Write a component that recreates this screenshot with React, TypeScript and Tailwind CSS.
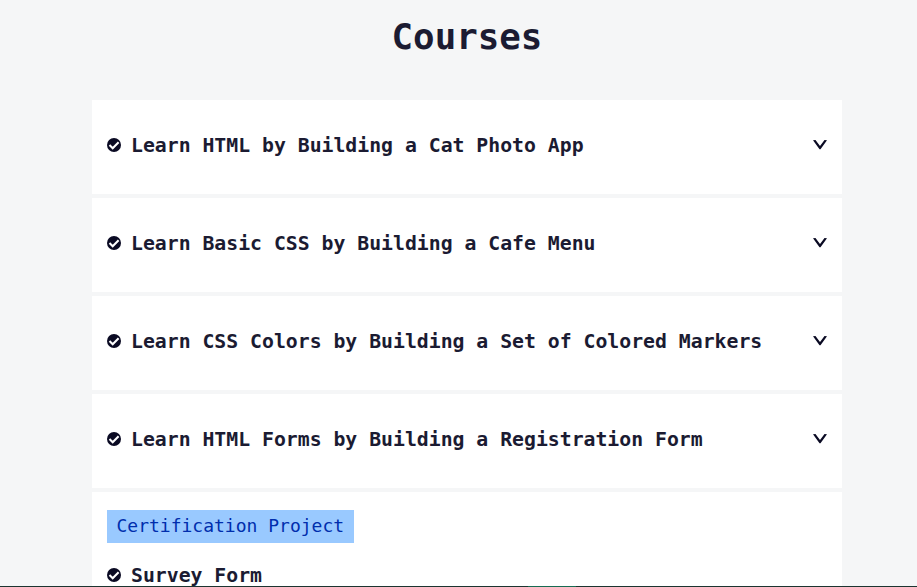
import React from 'react';

const courses = [
  'Learn HTML by Building a Cat Photo App',
  'Learn Basic CSS by Building a Cafe Menu',
  'Learn CSS Colors by Building a Set of Colored Markers',
  'Learn HTML Forms by Building a Registration Form',
];

function Check() {
  return (
    <svg className="size-[14px] shrink-0" viewBox="0 0 14 14">
      <circle cx="7" cy="7" r="7" fill="#0a0a23" />
      <path d="M2.5 7.1 5.7 10.2 11.6 4.3" fill="none" stroke="#fff" strokeWidth="2.1" />
    </svg>
  );
}

function Title({ text }: { text: string }) {
  return (
    <span className="flex items-center gap-[10px]">
      <Check />
      <span className="pt-0.5 text-[19.8px] leading-[26px] font-bold whitespace-pre">{text}</span>
    </span>
  );
}

export default function App() {
  return (
    <main className="flex h-[587px] flex-col overflow-hidden bg-[#f5f6f7] font-['DejaVu_Sans_Mono',monospace] text-[#1b1b32]">
      <div className="ml-[92px] h-[586px] w-[750px] shrink-0 overflow-hidden">
        <h1 className="h-[100px] pt-[15px] text-center text-[35.8px] leading-[44px] font-bold">Courses</h1>
        <div className="flex flex-col gap-1">
          {courses.map((c) => (
            <button key={c} className="flex h-[94px] w-full items-center justify-between bg-white px-[15px] pb-1">
              <Title text={c} />
              <svg className="h-[10px] w-[14px]" viewBox="0 0 14 10">
                <path d="M0 .2 2.5 0 7 6 11.5 0 14 .2 7.5 9.2H6.5Z" fill="#0a0a23" />
              </svg>
            </button>
          ))}
          <section className="h-[100px] bg-white px-[15px] pt-[18px]">
            <div className="mb-[18px] flex h-[33px] w-[247px] items-center bg-[#99c9ff] pb-0.5 pl-[9.5px] text-[18px] whitespace-nowrap text-[#002ead]">
              Certification Project
            </div>
            <Title text="Survey Form" />
          </section>
        </div>
      </div>
      <div className="h-px shrink-0 bg-[#1c3430]">
        <div className="ml-[528px] h-px w-12 bg-[#176b52]" />
      </div>
    </main>
  );
}
